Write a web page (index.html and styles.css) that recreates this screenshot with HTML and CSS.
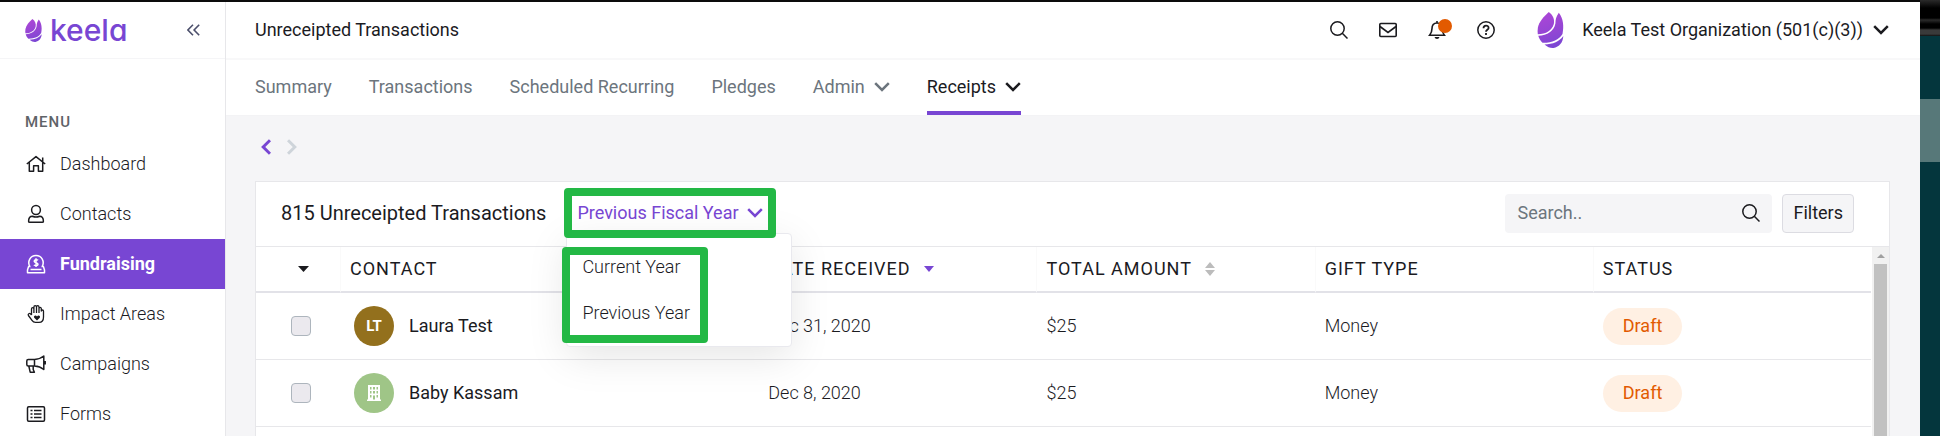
FILE: index.html
```
<!DOCTYPE html>
<html lang="en">
<head>
<meta charset="utf-8">
<title>Unreceipted Transactions</title>
<link rel="stylesheet" href="styles.css">
</head>
<body>
<svg class="defs" aria-hidden="true">
  <defs>
    <linearGradient id="flame" gradientUnits="userSpaceOnUse" x1="6" y1="4" x2="18" y2="36">
      <stop offset="0" stop-color="#a846d6"/>
      <stop offset="0.5" stop-color="#9446d4"/>
      <stop offset="1" stop-color="#7846d3"/>
    </linearGradient>
    <symbol id="logo" viewBox="0 0 26 36">
      <path fill="url(#flame)" d="M11.300 0C6.500 4.500 1.500 9.500 .4 15.500 0 17.800 0 20 .3 22.300 8.500 22.300 14.500 18.500 16.300 12 17.300 7.500 15.500 3 11.300 0Z"/>
      <path fill="url(#flame)" d="M21.300 .8C18.600 4.500 18 7.500 17.900 11.500 16.500 19 10 23.500 .8 23.800 1.500 26.500 3 28.800 5 30.800 14.500 31 21.500 28 25 22 26.500 14.500 26 6.500 21.300 .8Z"/>
      <path fill="url(#flame)" d="M25.800 24C22 29.500 15.500 32.300 7 32.400 10 35 13 36.200 16 35.900 21.800 35 25.500 30.500 25.800 24Z"/>
    </symbol>
    <symbol id="chevron" viewBox="0 0 16 10">
      <path fill="none" stroke="currentColor" stroke-width="2.500" d="M1.200 1.200 8 8 14.800 1.200"/>
    </symbol>
    <symbol id="search" viewBox="0 0 18 18">
      <g fill="none" stroke="currentColor" stroke-width="1.500"><circle cx="7.500" cy="7.500" r="6.700"/><path d="m12.300 12.300 5.200 5.200"/></g>
    </symbol>
  </defs>
</svg>
<div class="desktop">
  <div class="window">
    <aside class="sidebar">
      <div class="brand">
        <a class="brand-link" href="#"><svg class="brand-mark"><use href="#logo"/></svg><span class="brand-name">keela</span></a>
        <button class="icon-button" type="button" aria-label="Collapse menu">
          <svg width="13" height="12" viewBox="0 0 13 12" fill="none" stroke="#4b4f6b" stroke-width="1.600"><path d="M6 .8.9 6 6 11.200M12.200.8 7.100 6l5.100 5.200"/></svg>
        </button>
      </div>
      <h2 class="menu-title">MENU</h2>
      <nav class="menu">
        <a class="menu-item" href="#">
          <svg class="menu-icon" viewBox="0 0 20 20"><path d="M.8 10 10 2.600 19.200 10M3.300 8.500V17.200H7.600V11.800H12.400V17.200H16.700V8.500M16.700 7.500V3.500"/></svg>Dashboard</a>
        <a class="menu-item" href="#">
          <svg class="menu-icon" viewBox="0 0 20 20"><circle cx="10" cy="6" r="4.400"/><path d="M6.500 12.200C4 12.200 2.600 14.300 2.600 17.200Q2.600 18.300 3.700 18.300H16.300Q17.400 18.300 17.400 17.200C17.400 14.300 16 12.200 13.500 12.200Q10 13.800 6.500 12.200Z"/></svg>Contacts</a>
        <a class="menu-item menu-item-active" href="#">
          <svg class="menu-icon" viewBox="0 0 20 20"><path d="M4 13C.8 7 4.500 1.600 10 1.600S19.200 7 16 13M4.500 12.500H2.600L1.500 16V18.700H18.500V16L17.400 12.500H15.500M4.500 15.600H15.500M12 6.300C11.200 5.400 8.200 5.300 8.200 7.200 8.200 9.200 12 8.200 12 10.300 12 12.200 8.800 12 7.900 10.900M10 4.300V13"/></svg>Fundraising</a>
        <a class="menu-item" href="#">
          <svg class="menu-icon" viewBox="0 0 20 20"><path d="M5.500 11V5Q5.500 3.600 6.700 3.600T7.900 5V9M7.900 9V3Q7.900 1.600 9.200 1.600T10.500 3V9M10.500 9V3Q10.500 1.600 11.700 1.600T13 3V9M13 9V4.500Q13 3.300 14.100 3.300T15.300 4.500V7Q15.300 6 16.400 6T17.500 7.200V13Q17.500 18.400 13 18.400H9.500Q7.300 18.400 6 16.400L2.400 11.500Q1.800 10.300 2.800 9.700T4.500 9.900L5.500 11" stroke-width="1.300"/><path fill="currentColor" stroke="none" d="m11 16.500-2.800-2.800C7 12 9.800 10.600 11 12.500 12.200 10.600 15 12 13.800 13.700Z"/></svg>Impact Areas</a>
        <a class="menu-item" href="#">
          <svg class="menu-icon" viewBox="0 0 20 20"><path d="M8.500 5.500H2.200Q.8 5.500.8 7V10.500Q.8 12 2.200 12H8.500ZM8.500 5.500Q14 5.200 17.800 2V15.500Q14 12.300 8.500 12M2.800 12 4.200 18.200H8.400L7.200 15.500V12M19.200 7V10.500"/></svg>Campaigns</a>
        <a class="menu-item" href="#">
          <svg class="menu-icon" viewBox="0 0 20 20"><rect x="1.500" y="2.700" width="17" height="14.600" rx="1.200"/><path d="M4.500 6.500H6.500M8 6.500H15.500M4.500 10H6.500M8 10H15.500M4.500 13.500H6.500M8 13.500H15.500"/></svg>Forms</a>
      </nav>
    </aside>
    <main class="main">
      <header class="topbar">
        <h1 class="page-title">Unreceipted Transactions</h1>
        <div class="tools">
          <button class="icon-button" type="button" aria-label="Search"><svg width="18" height="18"><use href="#search"/></svg></button>
          <button class="icon-button" type="button" aria-label="Messages"><svg width="18" height="18" viewBox="0 0 18 18" fill="none" stroke="currentColor" stroke-width="1.600"><rect x=".8" y="2.500" width="16.400" height="13" rx="1"/><path d="M1 5.500 9 11.500 17 5.500"/></svg></button>
          <button class="icon-button bell" type="button" aria-label="Notifications"><svg width="18" height="18" viewBox="0 0 18 18"><path fill="none" stroke="currentColor" stroke-width="1.600" d="M9 2C5.500 2 4 4.500 4 7.500 4 11 3 12.500 1.600 14.200H16.400C15 12.500 14 11 14 7.500 14 4.500 12.500 2 9 2ZM9 0V2"/><path fill="currentColor" d="M6.500 16H11.500Q11 18 9 18T6.500 16Z"/></svg><span class="badge"></span></button>
          <button class="icon-button" type="button" aria-label="Help"><svg width="18" height="18" viewBox="0 0 18 18" fill="none" stroke="currentColor"><circle cx="9" cy="9" r="8.200" stroke-width="1.500"/><path stroke-width="1.800" d="M6.500 7.200C6.500 3.600 11.600 3.800 11.600 6.900 11.600 8.800 9 8.800 9 10.700M9 12V14"/></svg></button>
        </div>
        <button class="org" type="button"><svg class="org-mark"><use href="#logo"/></svg><span class="org-label">Keela Test Organization (501(c)(3))<svg class="chevron"><use href="#chevron"/></svg></span></button>
      </header>
      <nav class="tabs">
        <a class="tab" href="#">Summary</a>
        <a class="tab" href="#">Transactions</a>
        <a class="tab" href="#">Scheduled Recurring</a>
        <a class="tab" href="#">Pledges</a>
        <a class="tab" href="#">Admin<svg class="chevron"><use href="#chevron"/></svg></a>
        <a class="tab tab-active" href="#">Receipts<svg class="chevron"><use href="#chevron"/></svg></a>
      </nav>
      <section class="content">
        <div class="pager">
          <button class="icon-button pager-back" type="button" aria-label="Back"><svg width="10" height="16" viewBox="0 0 10 16" fill="none" stroke="currentColor" stroke-width="3"><path d="M9 1.200 2.200 8 9 14.800"/></svg></button>
          <button class="icon-button pager-forward" type="button" aria-label="Forward"><svg width="10" height="16" viewBox="0 0 10 16" fill="none" stroke="currentColor" stroke-width="3"><path d="M1 1.200 7.800 8 1 14.800"/></svg></button>
        </div>
        <div class="card">
          <div class="toolbar">
            <h2 class="card-title">815 Unreceipted Transactions</h2>
            <div class="period">
              <button class="period-button" type="button" aria-expanded="true">Previous Fiscal Year<svg class="chevron"><use href="#chevron"/></svg></button>
              <div class="period-menu">
                <div class="period-options">
                  <a class="period-option" href="#">Current Year</a>
                  <a class="period-option" href="#">Previous Year</a>
                </div>
              </div>
              <span class="period-outline"></span>
            </div>
            <div class="search">
              <input class="search-input" type="text" placeholder="Search.." aria-label="Search transactions">
              <svg class="search-icon"><use href="#search"/></svg>
            </div>
            <button class="filters" type="button">Filters</button>
          </div>
          <div class="table-area">
            <table class="table">
              <colgroup><col class="col-check"><col class="col-contact"><col><col><col><col></colgroup>
              <thead>
                <tr>
                  <th class="cell-check"><button class="icon-button" type="button" aria-label="Select rows"><svg width="11" height="6" viewBox="0 0 11 6"><path fill="#1b1b1f" d="M0 0H11L5.500 6Z"/></svg></button></th>
                  <th>CONTACT</th>
                  <th><span class="sort">DATE RECEIVED<svg width="10" height="6" viewBox="0 0 10 6"><path fill="#7846d3" d="M0 0H10L5 6Z"/></svg></span></th>
                  <th><span class="sort">TOTAL AMOUNT<svg width="10" height="14" viewBox="0 0 10 14"><path fill="#bcbcbc" d="M0 6H10L5 0ZM0 8H10L5 14Z"/></svg></span></th>
                  <th>GIFT TYPE</th>
                  <th>STATUS</th>
                </tr>
              </thead>
              <tbody>
                <tr>
                  <td class="cell-check"><input class="check" type="checkbox" aria-label="Select Laura Test"></td>
                  <td><div class="contact"><span class="avatar avatar-person">LT</span>Laura Test</div></td>
                  <td>Dec 31, 2020</td>
                  <td>$25</td>
                  <td>Money</td>
                  <td><span class="pill">Draft</span></td>
                </tr>
                <tr>
                  <td class="cell-check"><input class="check" type="checkbox" aria-label="Select Baby Kassam"></td>
                  <td><div class="contact"><span class="avatar avatar-org"><svg width="14" height="16" viewBox="0 0 14 16"><path fill="#fff" fill-rule="evenodd" d="M1 0H13V14.500H14V16H0V14.500H1ZM3 2V4.500H4.500V2ZM6 2V4.500H8V2ZM9.500 2V4.500H11V2ZM3 6V8.500H4.500V6ZM6 6V8.500H8V6ZM9.500 6V8.500H11V6ZM3 10V12.500H4.500V10ZM9.500 10V12.500H11V10ZM6 10.500V14.500H8V10.500Z"/></svg></span>Baby Kassam</div></td>
                  <td>Dec 8, 2020</td>
                  <td>$25</td>
                  <td>Money</td>
                  <td><span class="pill">Draft</span></td>
                </tr>
              </tbody>
            </table>
            <div class="scrollbar">
              <svg class="scroll-arrow" viewBox="0 0 8 4"><path fill="#a0a0a0" d="M0 4H8L4 0Z"/></svg>
              <div class="scroll-thumb"></div>
            </div>
          </div>
        </div>
      </section>
    </main>
  </div>
  <div class="backdrop"><div class="backdrop-top"></div><div class="backdrop-handle"></div></div>
</div>
</body>
</html>
```
FILE: styles.css
```
* {
  box-sizing: border-box;
}

body {
  margin: 0;
  font: 400 18px/24px Roboto, "Liberation Sans", sans-serif;
  color: #1b1b1f;
  background: #04363d;
}

h1,
h2 {
  margin: 0;
}

a {
  color: inherit;
  text-decoration: none;
}

button,
input {
  font: inherit;
  color: inherit;
}

svg {
  display: block;
  flex: none;
}

.defs {
  position: absolute;
  width: 0;
  height: 0;
}

.desktop {
  display: flex;
  height: 100vh;
  overflow: hidden;
}

.window {
  display: flex;
  flex: 1;
  min-width: 0;
  border-top: 2px solid #0c0c0c;
  background: #fff;
}

.backdrop {
  width: 20px;
  background: #04363d;
}

.backdrop-top {
  height: 36px;
  margin-bottom: 63px;
  background: linear-gradient(#2a2a2a, #000 8px, #000 18px, #2b2b2b 20px, #000 24px, #000 28px, #3a3a3a 30px, #3a3a3a 34px, #111);
}

.backdrop-handle {
  height: 63px;
  background: #577879;
}

.icon-button {
  display: flex;
  padding: 0;
  border: 0;
  background: none;
}

.chevron {
  width: 16px;
  height: 10px;
}

/* Sidebar */

.sidebar {
  flex: none;
  width: 226px;
  border-right: 1px solid #e7e7ea;
}

.brand {
  display: flex;
  align-items: center;
  justify-content: space-between;
  height: 57px;
  padding: 0 25px;
  border-bottom: 1px solid #f5f5f7;
}

.brand-link {
  display: flex;
  align-items: center;
  gap: 8px;
}

.brand-mark {
  width: 17px;
  height: 23px;
}

.brand-name {
  font: 500 30px/32px Inter, sans-serif;
  font-feature-settings: "cv11";
  color: #7846d3;
}

.menu-title {
  padding: 51px 25px 5px;
  font-size: 15px;
  font-weight: 500;
  letter-spacing: 1px;
  color: #5f6368;
}

.menu {
  display: flex;
  flex-direction: column;
}

.menu-item {
  display: flex;
  align-items: center;
  gap: 14px;
  height: 50px;
  padding: 0 26px;
  font-weight: 300;
}

.menu-item-active {
  font-weight: 700;
  color: #fff;
  background: #7846d3;
}

.menu-icon {
  width: 20px;
  height: 20px;
  fill: none;
  stroke: currentColor;
  stroke-width: 1.5;
  stroke-linejoin: round;
}

/* Header */

.main {
  display: flex;
  flex: 1;
  flex-direction: column;
  min-width: 0;
}

.topbar {
  display: flex;
  align-items: center;
  height: 58px;
  padding: 0 31px 0 29px;
  border-bottom: 2px solid #f8f8f9;
}

.page-title {
  font-size: 18px;
  font-weight: 400;
}

.tools {
  display: flex;
  gap: 31px;
  margin-left: auto;
}

.bell {
  position: relative;
}

.badge {
  position: absolute;
  top: -2px;
  right: -6px;
  width: 14px;
  height: 14px;
  border-radius: 50%;
  background: #e25a00;
}

.org {
  display: flex;
  align-items: center;
  gap: 18px;
  margin-left: 42px;
  padding: 0;
  border: 0;
  background: none;
}

.org-mark {
  width: 27px;
  height: 36px;
}

.org-label {
  display: flex;
  align-items: center;
  gap: 10px;
}

.tabs {
  display: flex;
  gap: 37px;
  height: 56px;
  padding: 0 29px;
  border-bottom: 1px solid #f3f3f5;
  color: #6c757d;
}

.tab {
  display: flex;
  align-items: center;
  gap: 9px;
  padding-top: 3px;
  border-bottom: 4px solid transparent;
}

.tab-active {
  border-color: #7846d3;
  color: #1b1b1f;
}

/* Content */

.content {
  display: flex;
  flex: 1;
  flex-direction: column;
  min-height: 0;
  padding: 0 30px 0 29px;
  background: #f5f5f7;
}

.pager {
  display: flex;
  gap: 16px;
  padding: 23px 6px 26px;
}

.pager-back {
  color: #7846d3;
}

.pager-forward {
  color: #ced4da;
}

.card {
  display: flex;
  flex: 1;
  flex-direction: column;
  border: 1px solid #e7e7ea;
  border-bottom: 0;
  background: #fff;
}

.toolbar {
  display: flex;
  align-items: center;
  height: 65px;
  padding: 0 35px 2px 25px;
  border-bottom: 1px solid #e7e7ea;
}

.card-title {
  font-size: 20px;
  font-weight: 400;
}

.period {
  position: relative;
  margin-left: 31px;
}

.period-button {
  display: flex;
  align-items: center;
  gap: 8px;
  padding: 0;
  border: 0;
  color: #7846d3;
  background: none;
}

.period-outline {
  position: absolute;
  inset: -13px;
  border: 8px solid #23b845;
  border-radius: 4px;
  pointer-events: none;
}

.period-menu {
  position: absolute;
  top: 32px;
  left: -11px;
  width: 226px;
  padding: 13px 0 3px;
  border: 1px solid #e9e9ee;
  border-radius: 4px;
  background: #fff;
  box-shadow: 0 10px 40px rgba(0, 0, 0, 0.1);
}

.period-options {
  display: flex;
  flex-direction: column;
  gap: 22px;
  width: 146px;
  margin-left: -5px;
  padding: 0 12px 10px;
  border: 8px solid #23b845;
  border-radius: 4px;
  font-weight: 300;
  white-space: nowrap;
}

.search {
  display: flex;
  align-items: center;
  width: 267px;
  height: 39px;
  margin-left: auto;
  padding: 0 12px;
  border-radius: 4px;
  background: #f5f5f7;
}

.search-input {
  flex: 1;
  min-width: 0;
  padding: 0;
  border: 0;
  background: none;
}

.search-input::placeholder {
  color: #6c757d;
}

.search-icon {
  width: 18px;
  height: 18px;
}

.filters {
  height: 39px;
  margin-left: 10px;
  padding: 0 10px;
  border: 1px solid #dcdce2;
  border-radius: 4px;
  background: #f5f5f7;
}

/* Table */

.table-area {
  display: flex;
  flex: 1;
  align-items: flex-start;
}

.table {
  flex: 1;
  width: 100%;
  border-collapse: separate;
  border-spacing: 0;
  table-layout: fixed;
}

.col-check {
  width: 84px;
}

.col-contact {
  width: 25.9%;
}

.table th {
  height: 46px;
  padding: 0 9px;
  border-bottom: 2px solid #e2e2e8;
  border-left: 1px solid #fafafa;
  font-weight: 400;
  letter-spacing: 1px;
  text-align: left;
}

.table td {
  height: 67px;
  padding: 0 10px;
  border-bottom: 1px solid #e7e7ea;
  font-weight: 300;
}

.table .cell-check {
  padding-left: 35px;
  border-left: 0;
}

th.cell-check .icon-button {
  padding-left: 7px;
}

.sort {
  display: flex;
  align-items: center;
  gap: 13px;
}

.check {
  display: block;
  width: 20px;
  height: 20px;
  margin: 0;
  border: 1px solid #adb5bd;
  border-radius: 4px;
  background: #ebe9ee;
  appearance: none;
}

.contact {
  display: flex;
  align-items: center;
  gap: 15px;
  padding-left: 4px;
  font-weight: 400;
}

.avatar {
  display: grid;
  place-items: center;
  width: 40px;
  height: 40px;
  border-radius: 50%;
  font-size: 15px;
  font-weight: 700;
  color: #fff;
}

.avatar-person {
  background: #93701d;
}

.avatar-org {
  background: #9fc587;
}

.pill {
  display: inline-block;
  padding: 6px 20px 7px;
  border-radius: 20px;
  font-weight: 400;
  color: #e25a00;
  background: #fff0e3;
}

.scrollbar {
  display: flex;
  flex: none;
  flex-direction: column;
  align-items: center;
  align-self: stretch;
  width: 17px;
  margin-left: 1px;
  background: #f1f1f1;
}

.scroll-arrow {
  width: 8px;
  height: 4px;
  margin: 7px 0 6px;
}

.scroll-thumb {
  flex: 1;
  width: 13px;
  background: #c1c1c1;
}
```
